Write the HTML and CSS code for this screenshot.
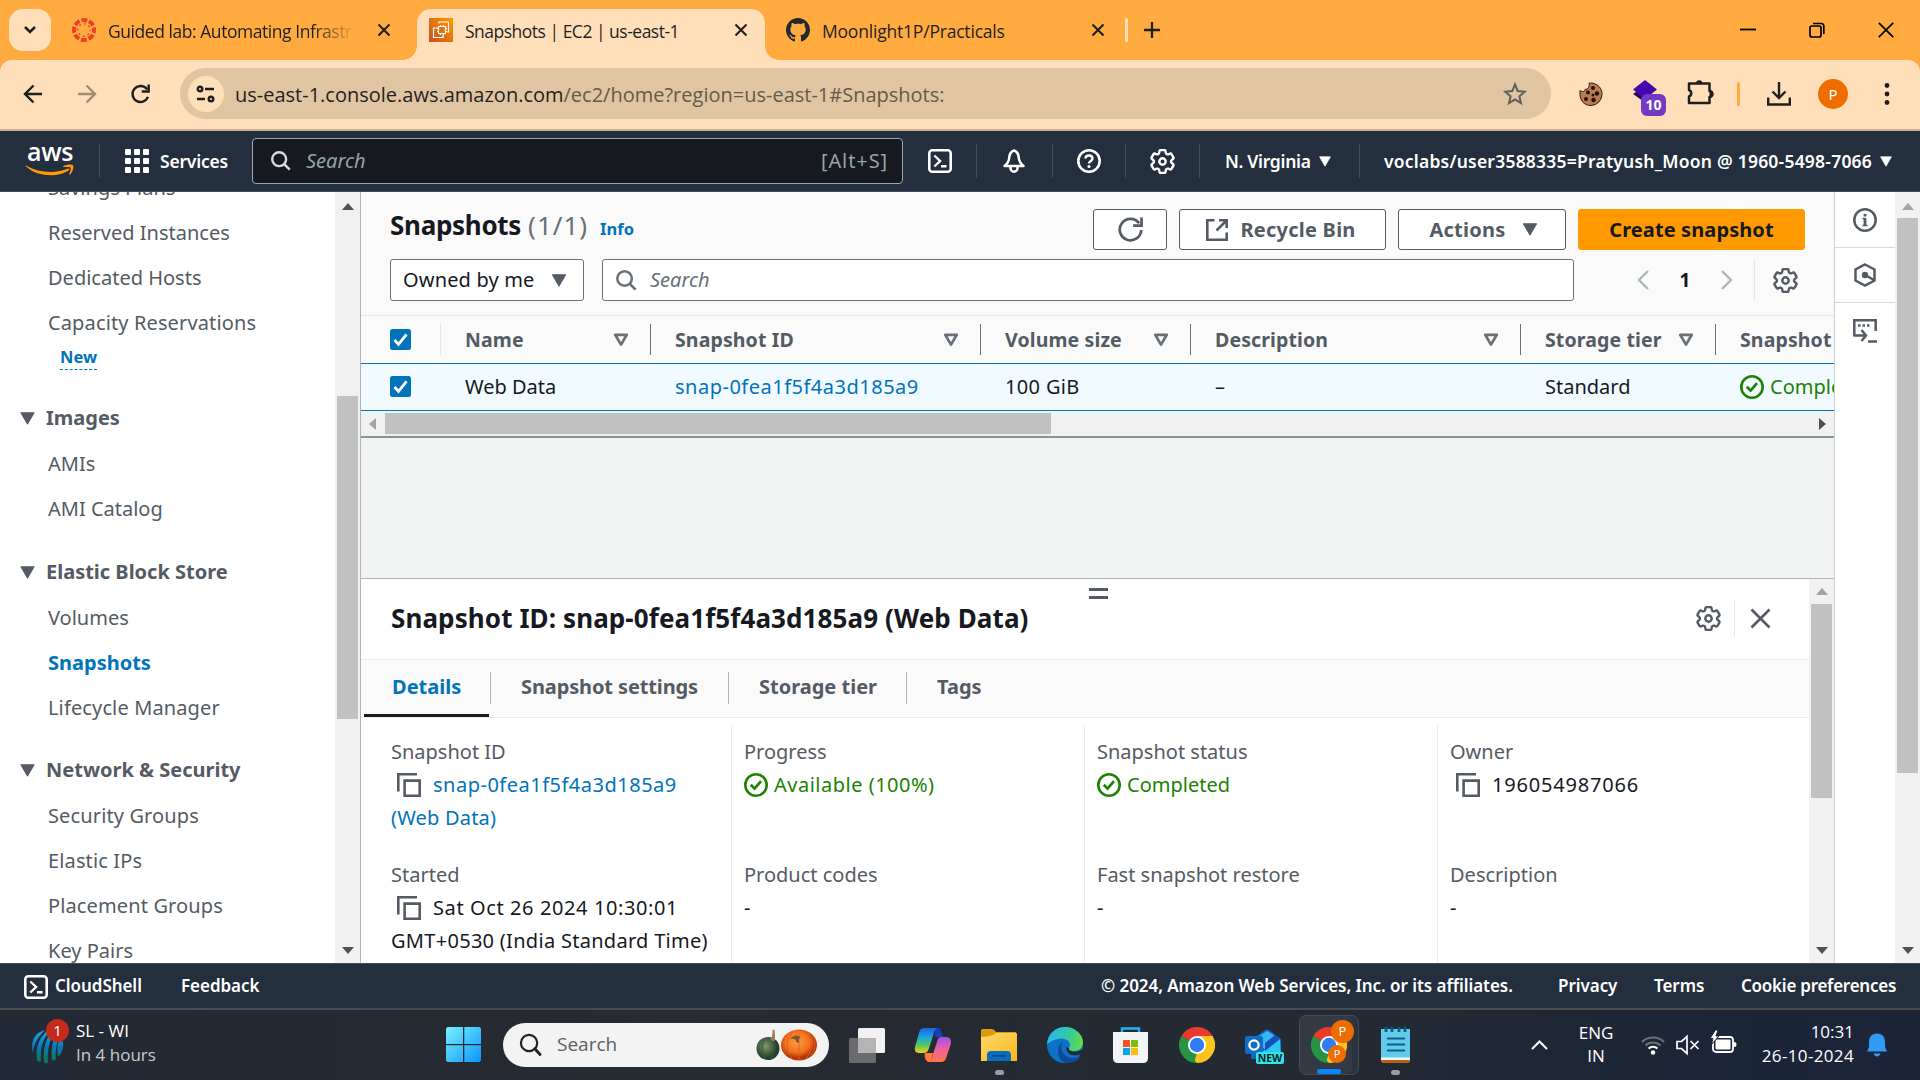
FILE: index.html
```html
<!DOCTYPE html>
<html lang="en">
<head>
<meta charset="utf-8">
<title>Snapshots | EC2 | us-east-1</title>
<link rel="stylesheet" href="styles.css">
</head>
<body>
<svg class="defs" width="0" height="0">
  <defs>
    <symbol id="gear" viewBox="2.2 2.2 19.6 19.6"><path fill="none" stroke="currentColor" stroke-width="1.9" d="M9.594 3.94c.09-.542.56-.94 1.11-.94h2.593c.55 0 1.02.398 1.11.94l.213 1.281c.063.374.313.686.645.87.074.04.147.083.22.127.325.196.72.257 1.075.124l1.217-.456a1.125 1.125 0 0 1 1.37.49l1.296 2.247a1.125 1.125 0 0 1-.26 1.431l-1.003.827c-.293.241-.438.613-.43.992a7.723 7.723 0 0 1 0 .255c-.008.378.137.75.43.991l1.004.827c.424.35.534.955.26 1.43l-1.298 2.247a1.125 1.125 0 0 1-1.369.491l-1.217-.456c-.355-.133-.75-.072-1.076.124a6.47 6.47 0 0 1-.22.128c-.331.183-.581.495-.644.869l-.213 1.281c-.09.543-.56.94-1.11.94h-2.594c-.55 0-1.019-.398-1.11-.94l-.213-1.281c-.062-.374-.312-.686-.644-.87a6.52 6.52 0 0 1-.22-.127c-.325-.196-.72-.257-1.076-.124l-1.217.456a1.125 1.125 0 0 1-1.369-.49l-1.297-2.247a1.125 1.125 0 0 1 .26-1.431l1.004-.827c.292-.24.437-.613.43-.991a6.932 6.932 0 0 1 0-.255c.007-.38-.138-.751-.43-.992l-1.004-.827a1.125 1.125 0 0 1-.26-1.43l1.297-2.247a1.125 1.125 0 0 1 1.37-.491l1.216.456c.356.133.751.072 1.076-.124.072-.044.146-.086.22-.128.332-.183.582-.495.644-.869l.214-1.28Z"/><circle cx="12" cy="12" r="2.5" fill="none" stroke="currentColor" stroke-width="1.9"/></symbol>
    <symbol id="close" viewBox="0 0 14 14"><path d="M1.5 1.5l11 11M12.5 1.5l-11 11" fill="none" stroke="currentColor" stroke-width="2.1"/></symbol>
    <symbol id="mag" viewBox="0 0 24 24"><circle cx="10" cy="10" r="7.6" fill="none" stroke="currentColor" stroke-width="2.6"/><path d="M15.5 15.5l6 6" stroke="currentColor" stroke-width="2.8"/></symbol>
    <symbol id="shell" viewBox="0 0 24 24"><rect x="1.3" y="1.3" width="21.4" height="21.4" rx="3" fill="none" stroke="currentColor" stroke-width="2.6"/><path d="M6.3 6.5l5.8 5.5-5.8 5.5M13 17.2h5.5" fill="none" stroke="currentColor" stroke-width="2.4"/></symbol>
    <symbol id="tri" viewBox="0 0 16 14"><path d="M.8.8h14.4L8 13.2z" fill="currentColor" stroke="currentColor" stroke-linejoin="round"/></symbol>
    <symbol id="sort" viewBox="0 0 16 14"><path d="M2.2 1.8h11.6L8 11.6z" fill="none" stroke="currentColor" stroke-width="2.7" stroke-linejoin="round"/></symbol>
    <symbol id="arrow" viewBox="0 0 12 7"><path d="M0 7l6-7 6 7z" fill="currentColor"/></symbol>
    <symbol id="ok" viewBox="0 0 24 24"><circle cx="12" cy="12" r="10.7" fill="none" stroke="currentColor" stroke-width="2.6"/><path d="M6.8 11.8l3.8 3.8 6.4-7.4" fill="none" stroke="currentColor" stroke-width="2.7"/></symbol>
    <symbol id="copy" viewBox="0 0 24 24"><path d="M1.3 18.5V1.3H20M7.6 7.6H22.7V22.7H7.6Z" fill="none" stroke="currentColor" stroke-width="2.6"/></symbol>
    <symbol id="reload" viewBox="0 0 24 24"><path d="M22.3 12.500A10.300 10.300 0 1 1 20.300 6" fill="none" stroke="currentColor" stroke-width="2.600"/><path d="M22.600 .5v7.800H14.500" fill="none" stroke="currentColor" stroke-width="2.600"/></symbol>
    <symbol id="check" viewBox="0 0 21 21"><rect width="21" height="21" rx="2.5" fill="#0073bb"/><path d="M4.500 11l4 4.300 8-10" fill="none" stroke="#fff" stroke-width="2.800"/></symbol>
    <symbol id="chrome" viewBox="0 0 36 36"><path d="M18 18L2.400 9A18 18 0 0 1 33.600 9z" fill="#ea3a2e"/><path d="M18 18L33.600 9A18 18 0 0 1 18 36z" fill="#fdc31f"/><path d="M18 18V36A18 18 0 0 1 2.400 9z" fill="#279445"/><path d="M18 9H33.600L26 22z" fill="#fdc31f"/><path d="M18 9H33.600L30 5H10z" fill="#ea3a2e"/><path d="M26 22L18 36l-5-6 5-4z" fill="#fdc31f"/><path d="M2.400 9L10.200 22.500 18 26l-3 9.500-12-10z" fill="#279445"/><circle cx="18" cy="18" r="9" fill="#fff"/><circle cx="18" cy="18" r="7.200" fill="#2f7ef0"/></symbol>
  </defs>
</svg>

<div class="tabstrip">
  <div class="tab-menu"><svg width="14" height="10" viewBox="0 0 14 10"><path d="M2 2l5 5 5-5" fill="none" stroke="#1f1f1f" stroke-width="2.500"/></svg></div>
  <div class="tab tab-lab">
    <svg class="fav" width="24" height="24" viewBox="0 0 24 24"><circle cx="12" cy="12" r="10" fill="none" stroke="#eb3f2b" stroke-width="4" stroke-dasharray="5.850 2" stroke-dashoffset="2.900"/><circle cx="12" cy="12" r="6.200" fill="none" stroke="#eb3f2b" stroke-width="1.600" stroke-dasharray="1.600 3.270" stroke-dashoffset=".8"/></svg>
    <span class="tab-title fade">Guided lab: Automating Infrastr</span>
    <svg class="x" width="14" height="14"><use href="#close"/></svg>
  </div>
  <div class="tab tab-active">
    <svg class="fav" width="24" height="24" viewBox="0 0 24 24"><defs><linearGradient id="ec" x1="0" y1="1" x2="1" y2="0"><stop offset="0" stop-color="#c8511b"/><stop offset="1" stop-color="#f90"/></linearGradient></defs><rect width="24" height="24" fill="url(#ec)"/><path d="M10 5.500V4h9.500v10H18M8.500 10H4.500v9.500H14V17M9.500 8.500h7v7h-7zM11.500 7v1.500M14.500 7v1.500M11.500 15.500V17M14.500 15.500V17M8 10.500h1.500M8 13.500h1.500M16.500 10.500H18M16.500 13.500H18" fill="none" stroke="#fff" stroke-width="1.200"/></svg>
    <span class="tab-title">Snapshots | EC2 | us-east-1</span>
    <svg class="x" width="14" height="14"><use href="#close"/></svg>
  </div>
  <div class="tab tab-git">
    <svg class="fav" width="24" height="24" viewBox="0 0 16 16"><path fill="#24292f" d="M8 0C3.580 0 0 3.580 0 8c0 3.540 2.290 6.530 5.470 7.590.4.070.55-.17.55-.38 0-.19-.01-.82-.01-1.490-2.010.37-2.530-.49-2.690-.94-.09-.23-.48-.94-.82-1.130-.28-.15-.68-.52-.01-.53.63-.01 1.080.58 1.230.82.72 1.210 1.870.87 2.330.66.070-.52.28-.87.51-1.070-1.780-.2-3.640-.89-3.640-3.950 0-.87.31-1.590.82-2.150-.08-.2-.36-1.020.08-2.120 0 0 .67-.21 2.200.82.640-.18 1.320-.27 2-.27s1.360.09 2 .27c1.530-1.040 2.200-.82 2.200-.82.440 1.100.16 1.920.08 2.120.510.560.820 1.270.820 2.150 0 3.070-1.870 3.750-3.650 3.950.290.250.540.730.540 1.480 0 1.070-.01 1.930-.01 2.200 0 .21.150.46.550.38A8.010 8.010 0 0 0 16 8c0-4.420-3.580-8-8-8z"/></svg>
    <span class="tab-title">Moonlight1P/Practicals</span>
    <svg class="x" width="14" height="14"><use href="#close"/></svg>
  </div>
  <div class="tab-sep"></div>
  <svg class="plus" width="16" height="16" viewBox="0 0 16 16"><path d="M8 0v16M0 8h16" stroke="#1f1f1f" stroke-width="2.300"/></svg>
  <div class="win">
    <svg width="16" height="16" viewBox="0 0 16 16"><path d="M0 7.500h16" stroke="#000" stroke-width="1.800"/></svg>
    <svg width="16" height="16" viewBox="0 0 16 16"><rect x="1" y="4" width="11" height="11" rx="2" fill="none" stroke="#000" stroke-width="1.700"/><path d="M4 1.500h8A2.500 2.500 0 0 1 14.800 4v8" fill="none" stroke="#000" stroke-width="1.700"/></svg>
    <svg width="16" height="16" viewBox="0 0 16 16"><path d="M.8.8l14.400 14.400M15.200.8L.8 15.200" stroke="#000" stroke-width="1.700"/></svg>
  </div>
</div>

<div class="toolbar-wrap"><div class="toolbar">
  <svg width="20" height="20" viewBox="0 0 20 20"><path d="M19 10H2M10.500 1.500L2 10l8.500 8.500" fill="none" stroke="#1f1f1f" stroke-width="2.400"/></svg>
  <svg width="20" height="20" viewBox="0 0 20 20"><path d="M1 10h17M9.500 1.500L18 10l-8.500 8.500" fill="none" stroke="#a08d76" stroke-width="2.400"/></svg>
  <svg class="dark" width="21" height="20" viewBox="0 0 24 24"><path d="M21 15.500A9.600 9.600 0 1 1 20 6.500" fill="none" stroke="currentColor" stroke-width="2.900"/><path d="M21.800.5v8.500H13.500" fill="none" stroke="currentColor" stroke-width="2.900"/></svg>
  <div class="omni">
    <span class="site"><svg width="20" height="18" viewBox="0 0 20 18"><g fill="none" stroke="#1f1f1f" stroke-width="2.400"><circle cx="4" cy="4" r="2.300"/><path d="M9 4h9M1 14h8"/><circle cx="15" cy="14" r="2.300"/></g></svg></span>
    <span class="url">us-east-1.console.aws.amazon.com<span>/ec2/home?region=us-east-1#Snapshots:</span></span>
    <svg width="24" height="24" viewBox="0 0 24 24"><path d="M12 2.500l2.700 6.600 7 .6-5.300 4.600 1.600 6.900-6-3.700-6 3.700 1.600-6.900-5.300-4.600 7-.6z" fill="none" stroke="#5f6060" stroke-width="2"/></svg>
  </div>
  <svg class="t1" width="24" height="24" viewBox="0 0 24 24"><path d="M10 1a6 6 0 0 0 3 0c6 1 10.300 5.500 10 11.500A11.300 11.300 0 0 1 12 23.500C5.500 23.500 1 19 1 12V8.500c2 1.500 5 1.500 5-1 3 0 5-3 4-6.500z" fill="#bb7a4f" stroke="#2c1a14"/><g fill="#21130f"><circle cx="14" cy="6" r="2"/><circle cx="9" cy="10.500" r="2"/><circle cx="18" cy="11.500" r="2.200"/><circle cx="14" cy="13" r="1.500"/><circle cx="7" cy="17" r="2"/><circle cx="14.500" cy="18" r="2.200"/></g></svg>
  <span class="t2 ext"><svg width="24" height="22" viewBox="0 0 24 22"><path d="M0 14l9-6 9 7-8 6z" fill="#1f0a5c"/><path d="M12 0l12 9.500L12 19 0 9.500z" fill="#4706ad"/></svg><b>10</b></span>
  <svg class="t3" width="26" height="26" viewBox="0 0 26 26"><path d="M2 4.500h20.500v7.500a3 3 0 0 1 0 6v6H2v-6.500a3.500 3.500 0 0 0 0-6.500z" fill="none" stroke="#1f1f1f" stroke-width="2.500" stroke-linejoin="round"/><path d="M9 4.500a3.200 3.200 0 0 1 6.400 0zM22.500 11.500a3.400 3.400 0 0 1 0 6.800z" fill="#1f1f1f"/></svg>
  <i class="t4"></i>
  <svg class="t5" width="24" height="24" viewBox="0 0 24 24"><path d="M12 0v15M5.500 9.500l6.500 6.500 6.500-6.500M1.200 15.500v7h21.600v-7" fill="none" stroke="#1f1f1f" stroke-width="2.400"/></svg>
  <span class="t6 avatar">P</span>
  <svg class="t7" width="6" height="22" viewBox="0 0 6 22"><g fill="#1f1f1f"><circle cx="3" cy="2.500" r="2.400"/><circle cx="3" cy="11" r="2.400"/><circle cx="3" cy="19.500" r="2.400"/></g></svg>
</div></div>

<header class="aws">
  <div class="logo"><span>aws</span><svg width="48" height="14" viewBox="0 0 48 14"><path d="M0 1.500C14 9.500 30 9.500 42 4.500c1.300-.5 2 .7 1 1.500C33 13.500 12 13.500 0 2.500c-.5-.6-.4-1.300 0-1z" fill="#f90"/><path d="M37.500 2c3-1.800 8.500-2 9.500-.8s0 6.500-3 9.300c-.6.500-1 .2-.8-.4 1-2.500 2-5.600 1.400-6.400s-4-.8-6.600-.6c-.8 0-1.100-.6-.5-1.100z" fill="#f90"/></svg></div>
  <div class="services"><svg width="24" height="24" viewBox="0 0 24 24"><g fill="#fff"><rect width="6" height="6" rx="1"/><rect x="9" width="6" height="6" rx="1"/><rect x="18" width="6" height="6" rx="1"/><rect y="9" width="6" height="6" rx="1"/><rect x="9" y="9" width="6" height="6" rx="1"/><rect x="18" y="9" width="6" height="6" rx="1"/><rect y="18" width="6" height="6" rx="1"/><rect x="9" y="18" width="6" height="6" rx="1"/><rect x="18" y="18" width="6" height="6" rx="1"/></g></svg><span>Services</span></div>
  <div class="aws-search"><svg width="22" height="22"><use href="#mag"/></svg><em>Search</em><span>[Alt+S]</span></div>
  <div class="cell c1"><svg width="24" height="24"><use href="#shell"/></svg></div>
  <div class="cell c2"><svg width="24" height="24" viewBox="0 0 24 24"><path d="M12 1.500c-4 1.200-4.600 4-4.800 7.500-.2 3-1.700 5.500-4.700 8h19c-3-2.500-4.500-5-4.700-8-.2-3.500-.8-6.300-4.800-7.500z" fill="none" stroke="#fff" stroke-width="2.500" stroke-linejoin="round"/><path d="M8.500 18v1.200a3.500 3.500 0 0 0 7 0V18" fill="none" stroke="#fff" stroke-width="2.500"/></svg></div>
  <div class="cell c3"><svg width="24" height="24" viewBox="0 0 24 24"><circle cx="12" cy="12" r="10.700" fill="none" stroke="#fff" stroke-width="2.600"/><path d="M8.500 9.600c0-4.200 7-4.200 7 0 0 2.400-3.500 2.400-3.500 5" fill="none" stroke="#fff" stroke-width="2.400"/><circle cx="12" cy="17.500" r="1.600" fill="#fff"/></svg></div>
  <div class="cell c4"><svg width="25" height="25"><use href="#gear"/></svg></div>
  <div class="cell region"><span>N. Virginia</span><svg width="12" height="11"><use href="#tri"/></svg></div>
  <div class="account"><span>voclabs/user3588335=Pratyush_Moon @ 1960-5498-7066</span><svg width="12" height="11"><use href="#tri"/></svg></div>
</header>

<div class="content">
  <nav class="side">
    <div class="links">
      <a>Savings Plans</a><a>Reserved Instances</a><a>Dedicated Hosts</a><a class="wide">Capacity Reservations</a>
      <div class="new"><b>New</b></div>
      <h3><svg width="15" height="13"><use href="#tri"/></svg>Images</h3>
      <a>AMIs</a><a>AMI Catalog</a>
      <h3 class="ebs"><svg width="15" height="13"><use href="#tri"/></svg>Elastic Block Store</h3>
      <a>Volumes</a><a class="on">Snapshots</a><a class="wide">Lifecycle Manager</a>
      <h3><svg width="15" height="13"><use href="#tri"/></svg>Network &amp; Security</h3>
      <a class="wide">Security Groups</a><a class="wide">Elastic IPs</a><a class="wide">Placement Groups</a><a>Key Pairs</a>
    </div>
    <div class="vbar vb-side"><svg class="up" width="12" height="7"><use href="#arrow"/></svg><i></i><svg class="down" width="12" height="7"><use href="#arrow"/></svg></div>
  </nav>

  <main class="main">
    <section class="list">
      <div class="head">
        <h1>Snapshots</h1><span class="count">(1/1)</span><span class="info">Info</span>
        <div class="btns">
          <div class="btn b-ref"><svg width="25" height="25"><use href="#reload"/></svg></div>
          <div class="btn b-bin"><svg width="22" height="22" viewBox="0 0 22 22"><path d="M8.500 1.300H1.300v19.400h19.400V13.500M13 1.300h7.700V9M20.500 1.500L10.500 11.500" fill="none" stroke="currentColor" stroke-width="2.600"/></svg><span>Recycle Bin</span></div>
          <div class="btn b-act"><span>Actions</span><svg width="16" height="13"><use href="#tri"/></svg></div>
          <div class="btn b-new"><span>Create snapshot</span></div>
        </div>
      </div>
      <div class="filters">
        <div class="select"><span>Owned by me</span><svg width="16" height="13"><use href="#tri"/></svg></div>
        <div class="search"><svg width="23" height="23"><use href="#mag"/></svg><em>Search</em></div>
        <div class="pages"><svg width="12" height="20" viewBox="0 0 12 20"><path d="M11 1L2 10l9 9" fill="none" stroke="#aab7b8" stroke-width="2.400"/></svg><b>1</b><svg width="12" height="20" viewBox="0 0 12 20"><path d="M1 1l9 9-9 9" fill="none" stroke="#aab7b8" stroke-width="2.400"/></svg></div>
        <div class="prefs"><svg width="25" height="25"><use href="#gear"/></svg></div>
      </div>
      <div class="row thead">
        <div class="ck"><svg width="21" height="21"><use href="#check"/></svg></div>
        <div>Name<svg width="16" height="14"><use href="#sort"/></svg></div>
        <div>Snapshot ID<svg width="16" height="14"><use href="#sort"/></svg></div>
        <div>Volume size<svg width="16" height="14"><use href="#sort"/></svg></div>
        <div>Description<svg width="16" height="14"><use href="#sort"/></svg></div>
        <div>Storage tier<svg width="16" height="14"><use href="#sort"/></svg></div>
        <div>Snapshot status</div>
      </div>
      <div class="row trow">
        <div class="ck"><svg width="21" height="21"><use href="#check"/></svg></div>
        <div>Web Data</div>
        <div class="link id">snap-0fea1f5f4a3d185a9</div>
        <div class="gib">100 GiB</div>
        <div>–</div>
        <div>Standard</div>
        <div class="green"><svg width="24" height="24"><use href="#ok"/></svg>Completed</div>
      </div>
      <div class="hbar"><svg class="l" width="7" height="12" viewBox="0 0 7 12"><path d="M7 0v12L0 6z" fill="#a3a3a3"/></svg><i></i><svg class="r" width="7" height="12" viewBox="0 0 7 12"><path d="M0 0v12l7-6z" fill="#505050"/></svg></div>
    </section>

    <section class="panel">
      <div class="pbody">
        <div class="ptop">
          <h2>Snapshot ID: snap-0fea1f5f4a3d185a9 (Web Data)</h2>
          <div class="grip"></div>
          <div class="pgear"><svg width="25" height="25"><use href="#gear"/></svg></div>
          <div class="pclose"><svg width="21" height="21" viewBox="0 0 21 21"><path d="M1.500 1.500l18 18M19.500 1.500l-18 18" stroke="#545b64" stroke-width="2.600"/></svg></div>
        </div>
        <div class="tabs"><span class="a"><b>Details</b></span><span class="b"><b>Snapshot settings</b></span><span class="c"><b>Storage tier</b></span><span class="d"><b>Tags</b></span></div>
        <div class="details">
          <div class="col"><label>Snapshot ID</label><p class="link"><svg class="cp" width="24" height="24"><use href="#copy"/></svg><span class="id">snap-0fea1f5f4a3d185a9</span><br><span class="web">(Web Data)</span></p><label>Started</label><p><svg class="cp" width="24" height="24"><use href="#copy"/></svg><span class="date">Sat Oct 26 2024 10:30:01</span><br><span class="zone">GMT+0530 (India Standard Time)</span></p></div>
          <div class="col"><label>Progress</label><p class="green"><svg class="okc" width="24" height="24"><use href="#ok"/></svg><span class="pct">Available (100%)</span></p><label>Product codes</label><p>-</p></div>
          <div class="col"><label>Snapshot status</label><p class="green"><svg class="okc" width="24" height="24"><use href="#ok"/></svg>Completed</p><label>Fast snapshot restore</label><p>-</p></div>
          <div class="col"><label>Owner</label><p><svg class="cp" width="24" height="24"><use href="#copy"/></svg><span class="num">196054987066</span></p><label>Description</label><p>-</p></div>
        </div>
      </div>
      <div class="vbar vb-panel"><svg class="up dim" width="12" height="7"><use href="#arrow"/></svg><i></i><svg class="down" width="12" height="7"><use href="#arrow"/></svg></div>
    </section>
  </main>

  <aside class="rail">
    <div class="first"><svg width="24" height="24" viewBox="0 0 24 24"><circle cx="12" cy="12" r="10.700" fill="none" stroke="currentColor" stroke-width="2.500"/><path d="M12 10v8M12 6v2.500" stroke="currentColor" stroke-width="2.800"/><path d="M9.500 10.500h2.500M9.500 17.500h5" stroke="currentColor" stroke-width="1.400"/></svg></div>
    <div><svg width="24" height="24" viewBox="0 0 24 24"><path d="M12 1.500l9.500 5v11L12 22.500l-9.500-5v-11z" fill="none" stroke="currentColor" stroke-width="2.500"/><circle cx="12" cy="12" r="3.200" fill="currentColor"/><path d="M12 12l9 5" stroke="currentColor" stroke-width="2.500"/></svg></div>
    <div class="last"><svg width="24" height="24" viewBox="0 0 24 24"><path d="M1.300 17.500V1.300h21.400V12M1.300 16.500h11M8.500 11l4.500 5.500-4.500 5.500" fill="none" stroke="currentColor" stroke-width="2.500"/><path d="M5 6.500h2.500M9.500 6.500H12M14 6.500h2.500M15 22.500h9" stroke="currentColor" stroke-width="2.600"/></svg></div>
  </aside>
  <div class="vbar vb-page"><svg class="up dim" width="12" height="7"><use href="#arrow"/></svg><i></i><svg class="down" width="12" height="7"><use href="#arrow"/></svg></div>
</div>

<footer class="foot">
  <svg width="24" height="24"><use href="#shell"/></svg><span>CloudShell</span><span>Feedback</span><span>© 2024, Amazon Web Services, Inc. or its affiliates.</span><span>Privacy</span><span>Terms</span><span class="cookie">Cookie preferences</span>
</footer>

<div class="taskbar">
  <div class="widget">
    <svg width="40" height="44" viewBox="0 0 40 44"><defs><linearGradient id="wg" x1="0" y1="0" x2="0" y2="1"><stop offset="0" stop-color="#20a7e8"/><stop offset=".5" stop-color="#0b78b8"/><stop offset="1" stop-color="#0c7a43"/></linearGradient></defs><path d="M15 7C4 10 0 19 3 30c1-9 4-15 12-23zM18 7C9 15 5 24 7 37c1 2 3 2 4 1-1-12 1-21 9-30zM22 8c-7 9-9 18-8 31 1 2 3 2 4 0-1-11 1-21 7-30zM27 10c-5 8-6 17-5 27 1 1 3 0 4-1-1-9 1-17 4-24zM31 14c-4 6-4 12-3 20 5-5 7-13 3-20z" fill="url(#wg)"/></svg>
    <b>1</b>
    <div class="wtext"><span>SL - WI</span><span class="sub">In 4 hours</span></div>
  </div>
  <svg class="k-win" width="35" height="35" viewBox="0 0 35 35"><defs><linearGradient id="ww" x1="0" y1="0" x2="1" y2="1"><stop offset="0" stop-color="#79f0fd"/><stop offset="1" stop-color="#0a96fb"/></linearGradient></defs><path d="M1.500 0H17v17H0V1.500zM18.300 0H33.500L35 1.500V17H18.300zM0 18.300h17V35H1.500L0 33.500zM18.300 18.300H35v15.200L33.500 35H18.300z" fill="url(#ww)"/></svg>
  <div class="tsearch"><svg width="23" height="23" viewBox="0 0 24 24"><circle cx="10.500" cy="10.500" r="8.500" fill="none" stroke="#222" stroke-width="2.300"/><path d="M16.500 16.500l5.500 6" stroke="#222" stroke-width="3" stroke-linecap="round"/></svg><span>Search</span>
    <svg width="62" height="32" viewBox="0 0 62 32"><defs><radialGradient id="pk" cx=".45" cy=".4"><stop offset="0" stop-color="#ff9c45"/><stop offset=".7" stop-color="#f0701c"/><stop offset="1" stop-color="#b9380b"/></radialGradient><radialGradient id="pg" cx=".4" cy=".4"><stop offset="0" stop-color="#7f9a6b"/><stop offset="1" stop-color="#263f2a"/></radialGradient></defs><ellipse cx="12" cy="19.500" rx="11.500" ry="11.500" fill="url(#pg)"/><path d="M9 9q-6 10 0 21M15 9q6 10 0 21" fill="none" stroke="#3d5a3c"/><path d="M14 11q3-4 2.500-10l2-.5q1 7 0 12z" fill="#9a7a62"/><ellipse cx="43" cy="16" rx="18" ry="15.500" fill="url(#pk)"/><path d="M36 3q-10 12 0 27M43 4v27M51 4q9 12-1 26M30 6q-6 10 0 20M57 7q5 10-2 19" fill="none" stroke="#dd5f18" stroke-width=".8"/><path d="M34 10q5-6 11-2-3 1-2 6l-3-1q0-4-6-3z" fill="#7f5533"/></svg></div>
  <svg class="k" width="36" height="36" viewBox="0 0 36 36"><rect x="9" y="1" width="27" height="25" rx="1.500" fill="#f1f1f1"/><rect y="11" width="27" height="25" rx="1.500" fill="#777" fill-opacity=".85"/><path d="M9 11h18v15H9z" fill="#b4b4b4"/></svg>
  <svg class="k" width="36" height="36" viewBox="0 0 36 36"><defs><linearGradient id="c1" x1="0" y1="0" x2="0" y2="1"><stop offset="0" stop-color="#1b64e8"/><stop offset=".4" stop-color="#1ca8d4"/><stop offset=".7" stop-color="#5cc85a"/><stop offset="1" stop-color="#f4d019"/></linearGradient><linearGradient id="c2" x1="0" y1="0" x2="0" y2="1"><stop offset="0" stop-color="#9a52ee"/><stop offset=".5" stop-color="#f0609c"/><stop offset="1" stop-color="#ff7446"/></linearGradient></defs><path d="M20 1h5l3 9h-8z" fill="#123fc0"/><path d="M9 1h14c-3 0-4 4-5 8l-4 12c-1 4-3 5-6 5H4c-4 0-5-3-3.500-8L4 6c1-4 3-5 5-5z" fill="url(#c1)"/><path d="M10 26h8l-2 9h-3c-3-2-4-5-3-9z" fill="#ff7b39"/><path d="M27 10h4c4 0 6 3 4.500 8l-4 12c-1 4-3 5-6 5H13c4 0 4-4 5-8l4-12c1-4 2-5 5-5z" fill="url(#c2)"/></svg>
  <div class="k run"><svg width="36" height="36" viewBox="0 0 36 36"><defs><linearGradient id="fl" x1="0" y1="0" x2="1" y2="1"><stop offset="0" stop-color="#ffda6b"/><stop offset="1" stop-color="#f8b71c"/></linearGradient></defs><path d="M0 3.500Q0 2 1.500 2H11q2 0 4 3h20v10H0z" fill="#dd9b0c"/><path d="M0 10q10 0 15-4h20q1 0 1 1v27H0z" fill="url(#fl)"/><path d="M6 34v-6q0-4 4-4h16q4 0 4 4v6z" fill="#0b6cbe"/><path d="M11 29h14" stroke="#084a8c" stroke-width="1.600"/></svg></div>
  <svg class="k" width="36" height="36" viewBox="0 0 36 36"><defs><linearGradient id="e1" x1="0" y1=".3" x2="1" y2=".5"><stop offset="0" stop-color="#2bb5ef"/><stop offset=".6" stop-color="#36c99c"/><stop offset="1" stop-color="#62dd4b"/></linearGradient></defs><circle cx="18" cy="18" r="18" fill="#0c72c9"/><path d="M0 17C1 6 9 0 18 0c11 0 18 8 18 15 0 6-4 9-9 9-4 0-6-1-5-3 4-7-5-11-11-9-6 1-9 4-11 5z" fill="url(#e1)"/><path d="M16 14c-4 6 0 17 10 17 4 0 6-1 8-2-3 5-9 7-14 7C10 35 8 21 16 14z" fill="#10499a"/><path d="M22 21c-1 3 6 6 14 1v4l-3 1.500C26 30 19 27 19 20z" fill="#252b34"/></svg>
  <svg class="k" width="36" height="36" viewBox="0 0 36 36"><path d="M9 7V1.500h17V7" fill="none" stroke="#27b0f2" stroke-width="2.400"/><path d="M0 5h35v26q0 5-5 5H5q-5 0-5-5z" fill="#f3f4f5"/><path d="M10 13h7v7h-7z" fill="#f35325"/><path d="M18 13h7v7h-7z" fill="#81bc06"/><path d="M10 21h7v7h-7z" fill="#05a6f0"/><path d="M18 21h7v7h-7z" fill="#ffba08"/></svg>
  <svg class="k" width="36" height="36"><use href="#chrome"/></svg>
  <div class="k olk"><svg width="36" height="36" viewBox="0 0 36 36"><path d="M6 13L20 3q2-1 4 0l12 9v20H6z" fill="#1066c4"/><path d="M8 13L22 4l13 8-14 11z" fill="#35b8f1"/><path d="M35 12L18 24v10h18z" fill="#2ec6f5"/><path d="M20 16l10-8 5 4-15 12z" fill="#1551b5"/><rect y="9" width="18" height="18" rx="2" fill="#0f6cc9"/><circle cx="9" cy="18" r="4.600" fill="none" stroke="#fff" stroke-width="2.300"/></svg><b>NEW</b></div>
  <div class="k act"><svg width="36" height="36"><use href="#chrome"/></svg><b class="p1">P</b><b class="p2">P</b></div>
  <div class="k run note"><svg width="29" height="36" viewBox="0 0 29 36"><rect y="2" width="29" height="30" fill="#62cbea"/><path d="M0 32h29v2.500L27.500 36h-26L0 34.500z" fill="#bd5e10"/><path d="M0 30.500h29V33H0z" fill="#f5f5f5"/><path d="M5 0v5M11 0v5M18 0v5M24 0v5" stroke="#0d5c87" stroke-width="2.800"/><path d="M6 11.500h18M6 17.500h18M6 23.500h18" stroke="#0b5f90" stroke-width="2"/></svg></div>
  <svg class="chev" width="17" height="10" viewBox="0 0 17 10"><path d="M1 9l7.500-7.500L16 9" fill="none" stroke="#fff" stroke-width="2"/></svg>
  <div class="lang">ENG<br>IN</div>
  <svg class="wifi" width="24" height="20" viewBox="0 0 24 20"><path d="M1 7a16 16 0 0 1 22 0M4.500 10.500a11 11 0 0 1 15 0" fill="none" stroke="#6b7079" stroke-width="2"/><path d="M7.500 13.500a6.500 6.500 0 0 1 9 0" fill="none" stroke="#fff" stroke-width="2"/><circle cx="12" cy="17.500" r="2.200" fill="#fff"/></svg>
  <svg class="vol" width="24" height="20" viewBox="0 0 24 20"><path d="M1 6.500h4.500L11 1.500v17l-5.500-5H1zM14.500 6l8 8M22.500 6l-8 8" fill="none" stroke="#fff" stroke-width="1.700"/></svg>
  <svg class="bat" width="26" height="22" viewBox="0 0 26 22"><rect x="2" y="5" width="20" height="15" rx="3" fill="none" stroke="#fff" stroke-width="1.800"/><rect x="4.500" y="7.500" width="15" height="10" rx="1" fill="#fff"/><path d="M22 10h1.500q2 0 2 2.500t-2 2.500H22z" fill="#fff"/><path d="M4.500-2L-1 6.500h3l-1.500 6L8 4H5l2-6z" fill="#fff" stroke="#1f2735"/></svg>
  <div class="clock"><span>10:31</span><br><span class="day">26-10-2024</span></div>
  <svg class="bell" width="22" height="24" viewBox="0 0 22 24"><path d="M11 .5c5.500 0 8 4 8 8.500v5l2 4.500H1L3 14V9C3 4.500 5.500.5 11 .5z" fill="#2f9bf5"/><path d="M7.500 20.500h7q-1 3-3.500 3t-3.500-3z" fill="#2f9bf5"/></svg>
</div>
</body>
</html>
```

FILE: styles.css
```css
* { box-sizing: border-box; }
body {
  margin: 0; width: 1920px; height: 1080px; overflow: hidden;
  display: grid; grid-template-rows: 60px 71px 61px 771px 47px 70px;
  font: 20px/1.2 "Noto Sans", "Open Sans", sans-serif;
  color: #16191f; background: #fff;
}
svg { display: block; flex: none; overflow: visible; }
.defs { position: absolute; }
h1, h2, h3, p { margin: 0; }
b { font-weight: 700; }
span, em, a, b, h1, h2, h3 { white-space: nowrap; }
.link { color: #0073bb; }
.green { color: #1d8102; }

/* browser tabs */
.tabstrip { background: #ffab40; display: flex; align-items: center; }
.tab-menu { width: 42px; height: 42px; margin-left: 9px; border-radius: 14px; background: #ffdfb9; display: grid; place-items: center; }
.tab { display: flex; align-items: center; height: 51px; color: #1f1f1f; }
.tab-title { font: 17.5px/24px "Open Sans", sans-serif; margin-left: 12px; padding-top: 2px; flex: 1; letter-spacing: -.2px; }
.tab-lab { width: 366px; padding: 0 26px 0 21px; }
.fade { letter-spacing: -.45px; margin-right: 20px; -webkit-mask-image: linear-gradient(90deg, #000 82%, transparent 99%); mask-image: linear-gradient(90deg, #000 82%, transparent 99%); }
.tab-active { position: relative; align-self: flex-end; width: 348px; padding: 0 17px 9px 12px; border-radius: 14px 14px 0 0; background: #ffdfb9; }
.tab-active .tab-title { letter-spacing: -.5px; }
.tab-active::before, .tab-active::after { content: ""; position: absolute; bottom: 0; width: 14px; height: 14px; }
.tab-active::before { left: -14px; background: radial-gradient(circle at 0 0, transparent 13.5px, #ffdfb9 14px); }
.tab-active::after { right: -14px; background: radial-gradient(circle at 100% 0, transparent 13.5px, #ffdfb9 14px); }
.tab-git { width: 361px; padding: 0 21px 0 21px; }
.tab-sep { width: 3px; height: 24px; margin-left: -1px; border-radius: 2px; background: #ffdfb9; }
.plus { margin-left: 16px; }
.win { margin-left: auto; padding-right: 26px; display: flex; gap: 53px; }

/* browser toolbar */
.toolbar-wrap { background: #ffab40; }
.toolbar { height: 71px; padding: 0 0 2px 23px; background: #ffdfb9; border-bottom: 2px solid #c9b193; border-radius: 12px 12px 0 0; display: flex; align-items: center; gap: 34px; }
.dark { color: #1f1f1f; margin-left: -1px; }
.omni { width: 1371px; height: 51px; margin-left: -5px; border-radius: 26px; background: #dfc5a2; display: flex; align-items: center; padding: 0 24px 0 8px; }
.site { width: 36px; height: 36px; border-radius: 50%; background: #ffdfb9; display: grid; place-items: center; }
.url { flex: 1; margin-left: 11px; padding-top: 2px; font: 20px/28px "Open Sans", sans-serif; color: #1f1f1f; }
.url span { color: #66594b; }
.t1 { margin-left: -6px; }
.ext { position: relative; margin-left: -4px; margin-top: -6px; }
.ext b { position: absolute; left: 8px; top: 14px; width: 25px; height: 22px; border-radius: 6px; background: #6f3bc4; color: #fff; font: 700 14px/22px "Open Sans", sans-serif; text-align: center; }
.t3 { margin-left: -4px; margin-top: -3px; }
.t4 { width: 3px; height: 24px; margin-left: -10px; background: #ffab40; border-radius: 2px; }
.t5 { margin-left: -7px; }
.avatar { width: 30px; height: 30px; margin-left: -7px; border-radius: 50%; background: #ef6c00; color: #fff; font-size: 15px; line-height: 30px; text-align: center; }
.t7 { margin-left: 2px; }

/* console header */
.aws { background: #232f3e; border-bottom: 1px solid #414d5c; color: #fff; display: flex; align-items: center; font-weight: 600; font-size: 17.5px; }
.logo { width: 100px; height: 34px; padding-left: 26px; border-right: 1px solid #414d5c; }
.logo span { display: block; margin: -7px 0 0 1px; font: 600 25px/28px "Open Sans", sans-serif; letter-spacing: -.3px; }
.logo svg { margin-top: -1px; }
.services { display: flex; align-items: center; gap: 11px; width: 152px; padding-left: 25px; letter-spacing: -.2px; }
.aws-search { width: 651px; height: 46px; border: 1px solid #9ba7b6; border-radius: 4px; background: #16191f; display: flex; align-items: center; padding: 0 14px 0 17px; color: #95a5a6; font-weight: 400; font-size: 20px; }
.aws-search svg { color: #d5dbdb; }
.aws-search em { flex: 1; margin-left: 14px; }
.aws-search span { letter-spacing: .9px; }
.cell { height: 34px; border-right: 1px solid #414d5c; display: flex; align-items: center; justify-content: center; }
.c1 { width: 74px; justify-content: flex-start; padding-left: 25px; }
.c2 { width: 76px; padding-right: 2px; }
.c3 { width: 73px; }
.c4 { width: 74px; }
.region { width: 160px; padding: 0 28px 0 25px; justify-content: space-between; letter-spacing: -.3px; }
.account { flex: 1; display: flex; align-items: center; justify-content: space-between; padding: 0 28px 0 24px; letter-spacing: .22px; }

/* content frame */
.content { display: grid; grid-template-columns: 360px 1475px 60px 25px; overflow: hidden; }
.side { display: grid; grid-template-columns: 335px 25px; height: 771px; overflow: hidden; }
.links { margin-top: -27px; height: 798px; overflow: hidden; color: #545b64; }
.links a { display: block; height: 45px; line-height: 45px; padding-left: 48px; }
.links a.wide { letter-spacing: .13px; }
.links a.on { color: #0073bb; font-weight: 700; }
.links h3 { height: 46px; margin-top: 17px; padding-left: 20px; display: flex; align-items: center; gap: 11px; font-size: 20px; }
.links .new { height: 33px; padding: 0 0 0 60px; margin-top: -1px; margin-bottom: 1px; }
.new b { display: inline-block; color: #0073bb; font-size: 16.5px; line-height: 24px; border-bottom: 1.5px dashed #0073bb; }
.links .new + h3 { margin-top: 18px; }
.links .ebs { margin-top: 18px; }

.vbar { background: #f1f1f1; height: 771px; display: flex; flex-direction: column; align-items: center; color: #505050; }
.vbar i { width: 21px; background: #c1c1c1; }
.vbar .up { margin-top: 11px; }
.vbar .dim { color: #a3a3a3; }
.vbar .down { transform: rotate(180deg); margin-top: auto; margin-bottom: 9px; }
.vb-side i { margin-top: 186px; height: 323px; }
.vb-page i { margin-top: 8px; height: 555px; }
.vb-panel { height: 384px; }
.vb-panel .up { margin-top: 9px; }
.vb-panel i { margin-top: 9px; height: 194px; }

/* snapshot list */
.main { background: #f2f3f3; border-left: 1px solid #aab7b8; border-right: 1px solid #c9d0d2; display: flex; flex-direction: column; justify-content: space-between; overflow: hidden; }
.list { background: #fafafa; border-bottom: 2px solid #879596; overflow: hidden; }
.head { display: flex; align-items: center; height: 67px; padding: 1px 29px 0 29px; }
.head h1 { font-size: 26px; letter-spacing: -.3px; }
.count { font-size: 26px; color: #687078; margin-left: 7px; letter-spacing: 1px; }
.info { color: #0073bb; font-weight: 700; font-size: 16.5px; margin: 5px 0 0 12px; }
.btns { margin-left: auto; align-self: flex-start; padding-top: 16px; display: flex; gap: 12px; }
.btn { height: 41px; border: 1px solid #545b64; border-radius: 3px; background: #fff; color: #545b64; font-weight: 700; display: flex; align-items: center; justify-content: center; }
.btn span { letter-spacing: .25px; }
.b-ref { width: 74px; }
.b-bin { width: 207px; gap: 12px; padding-right: 3px; }
.b-act { width: 168px; gap: 16px; padding-left: 3px; }
.b-new { width: 227px; background: #f90; border-color: #f90; color: #16191f; }
.b-new span { letter-spacing: .1px; }
.filters { height: 57px; border-bottom: 1px solid #e3e6e6; display: flex; align-items: flex-start; padding-left: 29px; }
.select { width: 194px; height: 42px; border: 1px solid #687078; border-radius: 3px; background: #fff; display: flex; align-items: center; justify-content: space-between; padding: 0 16px 0 12px; letter-spacing: .15px; }
.select svg { color: #545b64; }
.search { width: 972px; height: 42px; margin-left: 18px; border: 1px solid #687078; border-radius: 3px; background: #fff; color: #687078; display: flex; align-items: center; padding-left: 12px; gap: 12px; }
.pages { width: 96px; height: 42px; margin-left: 63px; display: flex; align-items: center; justify-content: space-between; }
.pages b { font-size: 19px; }
.prefs { height: 42px; margin-left: 21px; padding-left: 18px; border-left: 1px solid #e3e6e6; color: #545b64; display: flex; align-items: center; }
.row { display: grid; grid-template-columns: 80px 210px 330px 210px 330px 195px 240px; height: 47px; align-items: center; white-space: nowrap; }
.row > div { display: flex; align-items: center; justify-content: space-between; padding: 0 21px 0 24px; height: 31px; }
.row > .ck { padding: 0 0 0 29px; }
.thead { color: #545b64; font-weight: 700; font-size: 19.5px; letter-spacing: .12px; }
.thead > div { border-right: 1px solid #687078; }
.thead > .ck { border-color: #e3e6e6; }
.thead svg { color: #687078; }
.trow { background: #f1faff; border: 1px solid #0073bb; border-right: 0; margin-left: -1px; padding-bottom: 1px; height: 48px; }
.row > .id, .id { letter-spacing: .5px; }
.gib { letter-spacing: .35px; }
.row > .green { justify-content: flex-start; gap: 6px; }
.hbar { height: 25px; background: #f1f1f1; display: flex; align-items: center; }
.hbar .l { margin-left: 8px; }
.hbar i { margin-left: 9px; width: 666px; height: 21px; background: #c1c1c1; }
.hbar .r { margin-left: auto; margin-right: 8px; }

/* split panel */
.panel { height: 385px; background: #fff; border-top: 1px solid #aab7b8; display: grid; grid-template-columns: 1448px 25px; }
.ptop { position: relative; height: 81px; border-bottom: 1px solid #eaeded; display: flex; align-items: center; padding: 0 0 1px 30px; }
.ptop h2 { flex: 1; font-size: 26px; letter-spacing: .1px; }
.grip { position: absolute; left: 728px; top: 9px; width: 19px; height: 11px; border: solid #545b64; border-width: 3px 0; }
.pgear { color: #545b64; height: 35px; padding-right: 13px; border-right: 1px solid #e3e6e6; display: flex; align-items: center; }
.pclose { margin: 0 38px 0 15px; }
.tabs { height: 58px; padding-left: 3px; background: #fafafa; border-bottom: 1px solid #eaeded; display: flex; color: #545b64; }
.tabs span { height: 57px; display: flex; align-items: center; padding: 0 0 4px 30px; position: relative; }
.tabs .a { width: 127px; padding-left: 28px; color: #0073bb; }
.tabs .a::before { content: ""; position: absolute; left: 0; bottom: 0; width: 125px; height: 3px; background: #16191f; }
.tabs .b { width: 238px; letter-spacing: -.12px; }
.tabs .c { width: 178px; }
.tabs span:not(.d)::after { content: ""; position: absolute; right: 0; top: 12px; width: 1px; height: 32px; background: #aab7b8; }
.details { display: grid; grid-template-columns: 370px 353px 353px 372px; height: 245px; padding-top: 7px; overflow: hidden; }
.col { padding: 10px 0 0 12px; border-left: 1px solid #eaeded; white-space: nowrap; line-height: 33px; height: 238px; overflow: hidden; }
.col:first-child { padding-left: 30px; border: 0; }
.col label { display: block; color: #545b64; }
.col p { height: 90px; }
.col svg { display: inline-block; vertical-align: -5px; }
.cp { margin: 0 12px 0 6px; color: #545b64; }
.okc { margin-right: 6px; }
.web { letter-spacing: .2px; }
.date { letter-spacing: .6px; }
.zone { letter-spacing: .29px; }
.pct { letter-spacing: .5px; }
.num { letter-spacing: .8px; }

/* tools rail */
.rail { background: #fff; color: #545b64; height: 771px; }
.rail div { height: 55px; border-bottom: 1px solid #d5dbdb; display: grid; place-items: center; }
.rail .first { height: 56px; padding-top: 1px; }
.rail .last { border: 0; }

/* console footer */
.foot { background: #232f3e; border-top: 1px solid #414d5c; border-bottom: 2px solid #4a4c50; color: #fff; display: grid; grid-template-columns: 24px 126px 927px 457px 96px 87px 1fr; padding: 1px 0 0 24px; align-items: center; font-size: 17px; font-weight: 600; letter-spacing: -.05px; }
.foot > span:nth-of-type(1) { padding-left: 7px; }
.foot > span:nth-of-type(2) { padding-left: 7px; }
.foot .cookie { letter-spacing: -.25px; }

/* taskbar */
.taskbar { background: linear-gradient(90deg, #222a35 0, #272b32 35%, #232a33 70%, #1b2539 92%, #1c2439); border-top: 1px solid #23272d; color: #fff; display: flex; align-items: center; padding-bottom: 2px; font: 17px/23px "Open Sans", sans-serif; }
.widget { position: relative; width: 446px; padding-left: 30px; display: flex; align-items: center; }
.widget b { position: absolute; left: 46px; top: -3px; width: 23px; height: 23px; border-radius: 50%; background: #c42b1c; font-weight: 400; font-size: 15px; text-align: center; }
.wtext { display: flex; flex-direction: column; margin: -3px 0 0 6px; line-height: 24px; }
.sub { color: #c8cacd; }
.tsearch { width: 326px; height: 44px; margin: 0 20px 0 22px; border-radius: 22px; background: #f3f3f3; display: flex; align-items: center; padding: 0 11px 0 16px; }
.tsearch span { flex: 1; margin-left: 15px; color: #606060; font-size: 19px; }
.k { width: 36px; margin-right: 30px; position: relative; }
.run::after { content: ""; position: absolute; left: 14px; top: 43px; width: 9px; height: 5px; border-radius: 3px; background: #9a9da1; }
.olk b { position: absolute; left: 11px; top: 25px; width: 28px; height: 12px; border-radius: 2px; background: #2ee6e3; color: #08222e; font: 700 10.5px/12px "Open Sans", sans-serif; text-align: center; }
.act { width: 60px; height: 60px; margin: 0 22px 0 -12px; border-radius: 7px; background: #343a43; border: 1px solid #444a53; display: flex; align-items: center; padding-left: 11px; box-shadow: inset -6px 0 #2d333d; }
.act::after { content: ""; position: absolute; left: 17px; bottom: 0; width: 24px; height: 5px; border-radius: 3px; background: #0a84ff; }
.act b { position: absolute; border-radius: 50%; background: #ef6c00; font-weight: 400; text-align: center; }
.act .p1 { left: 31px; top: 4px; width: 23px; height: 23px; font-size: 13px; }
.act .p2 { left: 28px; top: 29px; width: 18px; height: 18px; font-size: 11px; line-height: 18px; }
.note { width: 29px; margin-right: 121px; }
.note::after { left: 10px; }
.lang { width: 60px; margin-left: 18px; text-align: center; line-height: 22.5px; }
.wifi { margin-left: 15px; }
.vol { margin-left: 11px; }
.bat { margin-left: 11px; margin-top: -3px; }
.clock { width: 117px; text-align: right; margin-top: -2px; line-height: 24px; }
.day { letter-spacing: .35px; }
.bell { margin-left: 12px; }
```
